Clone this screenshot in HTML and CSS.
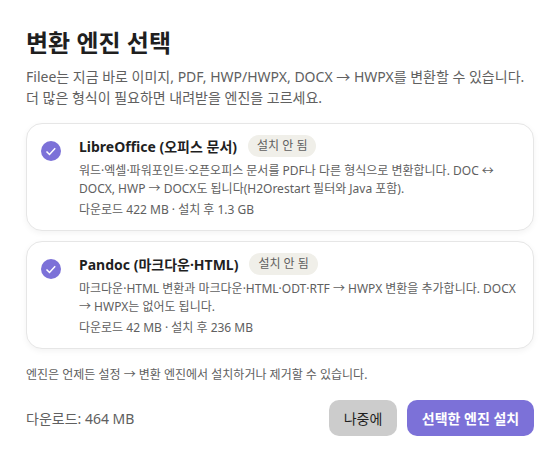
FILE: index.html
```html
<!DOCTYPE html>
<html lang="ko">
<head>
<meta charset="UTF-8">
<title>변환 엔진 선택</title>
<link rel="stylesheet" href="styles.css">
</head>
<body>
<div class="dialog">
  <h1 class="title">변환 엔진 선택</h1>
  <p class="intro">Filee는 지금 바로 이미지, PDF, HWP/HWPX, DOCX → HWPX를 변환할 수 있습니다.<br>더 많은 형식이 필요하면 내려받을 엔진을 고르세요.</p>

  <div class="card">
    <svg class="check" width="20" height="20" viewBox="0 0 20 20"><circle cx="10" cy="10" r="10" fill="#7c71d8"/><path d="M5.5 10.5l3 3 5.7-6.2" fill="none" stroke="#fff" stroke-width="1.5"/></svg>
    <div class="card-body">
      <div class="card-head">
        <span class="name">LibreOffice (오피스 문서)</span>
        <span class="badge">설치 안 됨</span>
      </div>
      <p class="desc">워드·엑셀·파워포인트·오픈오피스 문서를 PDF나 다른 형식으로 변환합니다. DOC ↔ DOCX, HWP → DOCX도 됩니다(H2Orestart 필터와 Java 포함).</p>
      <p class="size">다운로드 422 MB · 설치 후 1.3 GB</p>
    </div>
  </div>

  <div class="card">
    <svg class="check" width="20" height="20" viewBox="0 0 20 20"><circle cx="10" cy="10" r="10" fill="#7c71d8"/><path d="M5.5 10.5l3 3 5.7-6.2" fill="none" stroke="#fff" stroke-width="1.5"/></svg>
    <div class="card-body">
      <div class="card-head">
        <span class="name">Pandoc (마크다운·HTML)</span>
        <span class="badge">설치 안 됨</span>
      </div>
      <p class="desc">마크다운·HTML 변환과 마크다운·HTML·ODT·RTF → HWPX 변환을 추가합니다. DOCX → HWPX는 없어도 됩니다.</p>
      <p class="size">다운로드 42 MB · 설치 후 236 MB</p>
    </div>
  </div>

  <p class="note">엔진은 언제든 설정 → 변환 엔진에서 설치하거나 제거할 수 있습니다.</p>

  <div class="footer">
    <span class="total">다운로드: 464 MB</span>
    <div class="actions">
      <button class="btn later">나중에</button>
      <button class="btn install">선택한 엔진 설치</button>
    </div>
  </div>
</div>
</body>
</html>
```

FILE: styles.css
```css
* {
  box-sizing: border-box;
}
body {
  margin: 0;
  background: #fff;
  font-family: "Noto Sans", "Noto Sans CJK KR", sans-serif;
  color: #1f1f1f;
}
.dialog {
  width: 560px;
  padding: 25px 26px 0;
}
.title {
  margin: 0 0 5px;
  font-size: 24px;
  line-height: 36px;
  font-weight: 700;
}
.intro {
  margin: 0 0 15px;
  font-size: 14px;
  line-height: 21px;
  color: #606060;
}
.card {
  display: flex;
  align-items: flex-start;
  gap: 18px;
  padding: 11px 16px 11px 14px;
  margin-bottom: 10px;
  height: 108px;
  border: 1px solid #e6e6e6;
  border-radius: 16px;
  background: #fff;
  box-shadow: 0 2px 6px rgba(0, 0, 0, 0.05);
}
.check {
  flex: none;
  margin-top: 6px;
}
.card-body {
  flex: 1;
}
.card-head {
  display: flex;
  align-items: center;
  gap: 11px;
}
.name {
  font-size: 14px;
  font-weight: 700;
}
.badge {
  padding: 1px 9px;
  border-radius: 11px;
  background: #f0efe9;
  font-size: 12px;
  line-height: 20px;
  color: #606060;
}
.desc {
  margin: 5px 0 4px;
  font-size: 12px;
  line-height: 17.5px;
  color: #606060;
}
.size {
  margin: 0;
  font-size: 12px;
  line-height: 18px;
  color: #606060;
}
.note {
  margin: 17px 0 0;
  font-size: 12px;
  line-height: 18px;
  color: #606060;
}
.footer {
  display: flex;
  justify-content: space-between;
  align-items: center;
  margin-top: 16px;
}
.total {
  font-size: 14px;
  color: #606060;
}
.actions {
  display: flex;
  gap: 10px;
}
.btn {
  height: 36px;
  border: 0;
  border-radius: 10px;
  font-family: inherit;
  font-size: 14px;
}
.later {
  width: 68px;
  background: #cccccc;
  color: #1f1f1f;
  font-weight: 400;
}
.install {
  width: 127px;
  background: #7c71d8;
  color: #fff;
  font-weight: 700;
}
```
